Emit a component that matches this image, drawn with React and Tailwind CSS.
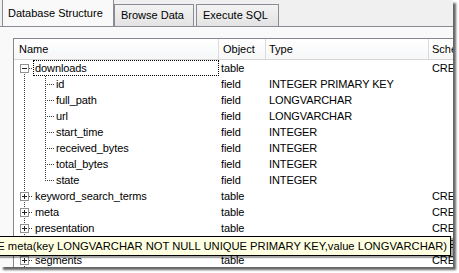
import React from 'react';

const F = { fontFamily: '"Liberation Sans", Arial, sans-serif' };

const rows = [
  { name: 'downloads', level: 0, exp: 'minus', first: true, focus: true, obj: 'table', type: '', schema: 'CREATE TABLE downloads (id INTEGER PRIMARY KEY,full_path LONGVARCHAR NOT NULL)' },
  { name: 'id', level: 1, obj: 'field', type: 'INTEGER PRIMARY KEY' },
  { name: 'full_path', level: 1, obj: 'field', type: 'LONGVARCHAR' },
  { name: 'url', level: 1, obj: 'field', type: 'LONGVARCHAR' },
  { name: 'start_time', level: 1, obj: 'field', type: 'INTEGER' },
  { name: 'received_bytes', level: 1, obj: 'field', type: 'INTEGER' },
  { name: 'total_bytes', level: 1, obj: 'field', type: 'INTEGER' },
  { name: 'state', level: 1, last: true, obj: 'field', type: 'INTEGER' },
  { name: 'keyword_search_terms', level: 0, exp: 'plus', obj: 'table', type: '', schema: 'CREATE TABLE keyword_search_terms (keyword_id INTEGER NOT NULL)' },
  { name: 'meta', level: 0, exp: 'plus', obj: 'table', type: '', schema: 'CREATE TABLE meta(key LONGVARCHAR NOT NULL UNIQUE PRIMARY KEY)' },
  { name: 'presentation', level: 0, exp: 'plus', obj: 'table', type: '', schema: 'CREATE TABLE presentation(url_id INTEGER PRIMARY KEY)' },
  { name: 'segment_usage', level: 0, exp: 'plus', obj: 'table', type: '', schema: 'CREATE TABLE segment_usage (id INTEGER PRIMARY KEY)' },
  { name: 'segments', level: 0, exp: 'plus', obj: 'table', type: '', schema: 'CREATE TABLE segments (id INTEGER PRIMARY KEY)' },
];

const DOT = '#3a3a3a';

function TreeLines({ row }) {
  const w = row.level === 0 ? 19 : 40;
  return (
    <svg width={w} height="16" className="shrink-0" shapeRendering="crispEdges">
      <line x1="10.5" y1={row.first ? 8 : 0} x2="10.5" y2="16" stroke={DOT} strokeDasharray="1 1" />
      {row.level === 0 && (
        <g>
          <line x1="15" y1="8.5" x2="19" y2="8.5" stroke={DOT} strokeDasharray="1 1" />
          <rect x="6.5" y="4.5" width="8" height="8" fill="#fff" stroke="#919191" />
          <line x1="8" y1="8.5" x2="13" y2="8.5" stroke="#222" />
          {row.exp === 'plus' && <line x1="10.5" y1="6" x2="10.5" y2="11" stroke="#222" />}
        </g>
      )}
      {row.level === 1 && (
        <g>
          <line x1="31.5" y1="0" x2="31.5" y2={row.last ? 9 : 16} stroke={DOT} strokeDasharray="1 1" />
          <line x1="33" y1="8.5" x2="40" y2="8.5" stroke={DOT} strokeDasharray="1 1" />
        </g>
      )}
    </svg>
  );
}

function Row({ row }) {
  return (
    <div className="flex h-[16px] items-center whitespace-nowrap text-[11px] tracking-[-0.1px] text-black">
      <div className="flex h-full w-[205px] shrink-0 items-center overflow-hidden">
        <TreeLines row={row} />
        {row.focus ? (
          <div className="flex h-full flex-1 items-center border border-dotted border-black pl-[1px]">{row.name}</div>
        ) : (
          <div className="pl-[2px]">{row.name}</div>
        )}
      </div>
      <div className="w-[47px] shrink-0 pl-[2px]">{row.obj}</div>
      <div className="w-[163px] shrink-0 pl-[3px]">{row.type}</div>
      <div className="pl-[3px]">{row.schema || ''}</div>
    </div>
  );
}

export default function App() {
  return (
    <div className="relative h-[273px] w-[459px] overflow-hidden bg-white" style={F}>
      <div className="h-[267px] w-[453px] overflow-hidden bg-[#f0f0f0] shadow-[3px_3px_2px_rgba(0,0,0,0.6)]">
        {/* tabs */}
        <div className="flex h-[26px] items-end pl-[2px] text-[11px] text-black">
          <div className="relative z-10 flex h-[27px] w-[112px] items-center border-x border-[#898c95] bg-[#f9f9f9] pl-[5px] pt-[1px]">
            Database Structure
          </div>
          <div className="flex h-[22px] w-[80px] items-center border-x border-t border-[#898c95] bg-gradient-to-b from-[#f3f3f3] to-[#e3e3e3] pl-[6px]">
            Browse Data
          </div>
          <div className="ml-[2px] flex h-[22px] w-[83px] items-center border-x border-t border-[#898c95] bg-gradient-to-b from-[#f3f3f3] to-[#e3e3e3] pl-[6px]">
            Execute SQL
          </div>
        </div>
        {/* pane */}
        <div className="h-[241px] border-t border-[#898c95] bg-[#f9f9f9] pl-[13px] pt-[11px]">
          <div className="h-[240px] w-[460px] border border-[#828790] bg-white">
            <div className="flex h-[21px] items-center border-b border-[#d5d5d5] bg-gradient-to-b from-white to-[#f6f7f8] text-[11px] text-black">
              <div className="flex h-full w-[205px] shrink-0 items-center border-r border-[#dcdcdc] pl-[5px]">Name</div>
              <div className="flex h-full w-[47px] shrink-0 items-center border-r border-[#dcdcdc] pl-[4px]">Object</div>
              <div className="flex h-full w-[163px] shrink-0 items-center border-r border-[#dcdcdc] pl-[3px]">Type</div>
              <div className="flex h-full items-center pl-[3px]">Schema</div>
            </div>
            {rows.map((r) => (
              <Row key={r.name} row={r} />
            ))}
          </div>
        </div>
      </div>
      {/* tooltip */}
      <div className="absolute right-[8px] top-[236px] flex h-[20px] items-center whitespace-nowrap border border-[#000] bg-[#ffffe1] px-[3px] text-[11.2px] text-black shadow-[2px_2px_1px_rgba(0,0,0,0.35)]">
        CREATE TABLE meta(key LONGVARCHAR NOT NULL UNIQUE PRIMARY KEY,value LONGVARCHAR)
      </div>
    </div>
  );
}
